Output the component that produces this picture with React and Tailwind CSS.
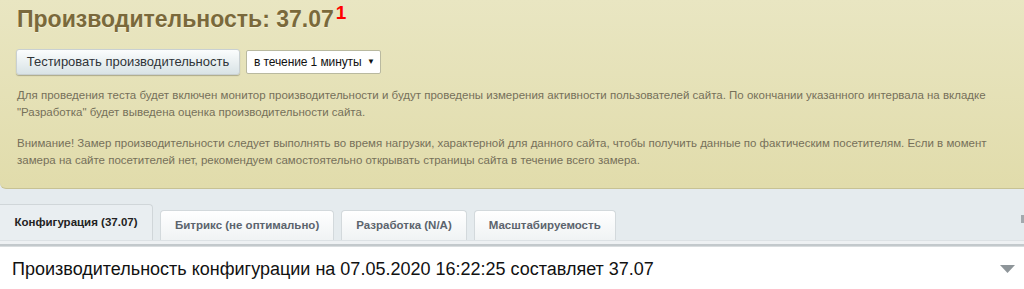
import React from "react";

export default function App() {
  const font = { fontFamily: '"Liberation Sans", Arial, sans-serif' };
  return (
    <div className="w-[1024px] h-[289px] overflow-hidden bg-white flex flex-col" style={font}>
      <div className="bg-[#e5ebee]">
        <div className="h-[189px] bg-gradient-to-b from-[#e9e6c2] to-[#e1dcab] border-b border-[#c7c294] rounded-bl-[6px] pl-[17px] pr-[20px] pt-[4px]">
          <div className="flex items-start">
            <h1 className="text-[23px] leading-[30px] font-bold text-[#7a693b] [text-shadow:0_1px_0_#f4f1d6]">
              Производительность: 37.07
            </h1>
            <span className="text-[19px] leading-[19px] font-bold text-[#ff0000] ml-[2px] -mt-[1px]">1</span>
          </div>
          <div className="flex items-center gap-[6px] mt-[15px] -ml-[1px]">
            <button className="h-[26px] w-[224px] rounded-[3px] bg-gradient-to-b from-[#fbfdfd] to-[#d9e3e6] border border-[#c9d0d2] shadow-[0_1px_1px_rgba(0,0,0,0.25)] text-[13px] text-[#2f3438]">
              Тестировать производительность
            </button>
            <div className="h-[24px] w-[135px] rounded-[2px] bg-white border border-[#b9b9a0] flex items-center justify-between pl-[7px] pr-[5px] text-[12px] text-[#111]">
              <span className="tracking-[-0.1px]">в течение 1 минуты</span>
              <span className="text-[8px] leading-none">▼</span>
            </div>
          </div>
          <div className="mt-[12px] text-[11.5px] leading-[17px] text-[#76705a]">
            <p>
              Для проведения теста будет включен монитор производительности и будут проведены измерения активности пользователей сайта. По окончании указанного интервала на вкладке "Разработка" будет выведена оценка производительности сайта.
            </p>
            <p className="mt-[14px]">
              Внимание! Замер производительности следует выполнять во время нагрузки, характерной для данного сайта, чтобы получить данные по фактическим посетителям. Если в момент замера на сайте посетителей нет, рекомендуем самостоятельно открывать страницы сайта в течение всего замера.
            </p>
          </div>
        </div>

        <div className="relative h-[51px] flex items-end gap-[7px]">
          <div className="h-[36px] w-[153px] rounded-tr-[4px] bg-[#e9eef1] border border-l-0 border-b-0 border-[#d0d6d9] flex items-center justify-center text-[11.5px] font-bold text-[#222]">
            Конфигурация (37.07)
          </div>
          <div className="h-[30px] px-[14px] rounded-t-[4px] bg-gradient-to-b from-[#ffffff] to-[#f0f3f4] border border-b-0 border-[#d3d9dc] flex items-center justify-center text-[11.5px] font-bold text-[#5c646d]">
            Битрикс (не оптимально)
          </div>
          <div className="h-[30px] px-[14px] rounded-t-[4px] bg-gradient-to-b from-[#ffffff] to-[#f0f3f4] border border-b-0 border-[#d3d9dc] flex items-center justify-center text-[11.5px] font-bold text-[#5c646d]">
            Разработка (N/A)
          </div>
          <div className="h-[30px] px-[14px] rounded-t-[4px] bg-gradient-to-b from-[#ffffff] to-[#f0f3f4] border border-b-0 border-[#d3d9dc] flex items-center justify-center text-[11.5px] font-bold text-[#5c646d]">
            Масштабируемость
          </div>
          <div className="absolute right-0 top-[26px] w-[3px] h-[8px] bg-[#a3a9ad]" />
        </div>
        <div className="h-[4px] bg-[#eef1f3] border-t border-[#dde2e5]" />
        <div className="h-[3px] bg-[#c3c9cc] border-b border-[#d9dddf]" />
      </div>

      <div className="bg-white flex-1 flex items-center justify-between pl-[12px] pr-[9px] pt-[2px]">
        <span className="text-[18px] text-[#111]">
          Производительность конфигурации на 07.05.2020 16:22:25 составляет 37.07
        </span>
        <svg width="15" height="8" viewBox="0 0 15 8">
          <polygon points="0,0 15,0 7.5,8" fill="#8e9599" />
        </svg>
      </div>
    </div>
  );
}
